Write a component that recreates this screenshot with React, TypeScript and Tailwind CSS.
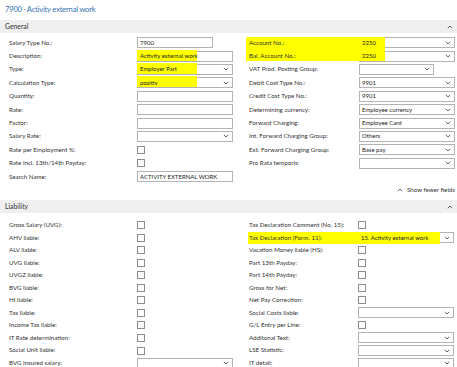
const font = { fontFamily: 'Lato, "Open Sans", sans-serif' }

type Ctl =
  | { kind: 'text'; value?: string; w?: string }
  | { kind: 'select'; value?: string; w?: string }
  | { kind: 'check' }

interface Field {
  label: string
  ctl: Ctl
}

const Chevron = ({ up = false }: { up?: boolean }) => (
  <svg width="6" height="4" viewBox="0 0 6 4" className="shrink-0">
    <polyline
      points={up ? '0.8,3.2 3,1 5.2,3.2' : '0.8,0.8 3,3 5.2,0.8'}
      fill="none"
      stroke="#555"
      strokeWidth="0.9"
    />
  </svg>
)

const Control = ({ ctl }: { ctl: Ctl }) => {
  if (ctl.kind === 'check') {
    return <div className="w-[8px] h-[8px] border border-[#8d8d8d] bg-white"></div>
  }
  return (
    <div
      className={`relative h-[11px] border border-[#b3b3b3] flex items-center justify-between pl-[2px] pr-[3px] ${
        ctl.w ?? 'w-[96px]'
      }`}
    >
      <span className="relative z-20 text-[6px] leading-none text-[#222] whitespace-nowrap">{ctl.value}</span>
      {ctl.kind === 'select' && (
        <span className="relative z-20">
          <Chevron />
        </span>
      )}
    </div>
  )
}

const Row = ({ f, h, lw }: { f: Field; h: string; lw: string }) => (
  <div className={`flex items-center ${h}`}>
    <div className={`relative z-20 shrink-0 text-[6.2px] leading-none text-[#333] whitespace-nowrap ${lw}`}>{f.label}</div>
    <Control ctl={f.ctl} />
  </div>
)

const generalLeft: Field[] = [
  { label: 'Salary Type No.:', ctl: { kind: 'text', value: '7900', w: 'w-[76px]' } },
  { label: 'Description:', ctl: { kind: 'text', value: 'Activity external work' } },
  { label: 'Type:', ctl: { kind: 'select', value: 'Employer Part' } },
  { label: 'Calculation Type:', ctl: { kind: 'select', value: 'positiv' } },
  { label: 'Quantity:', ctl: { kind: 'text' } },
  { label: 'Rate:', ctl: { kind: 'text' } },
  { label: 'Factor:', ctl: { kind: 'text' } },
  { label: 'Salary Rate:', ctl: { kind: 'select' } },
  { label: 'Rate per Employment %:', ctl: { kind: 'check' } },
  { label: 'Rate incl. 13th/14th Payday:', ctl: { kind: 'check' } },
  { label: 'Search Name:', ctl: { kind: 'text', value: 'ACTIVITY EXTERNAL WORK' } },
]

const generalRight: Field[] = [
  { label: 'Account No.:', ctl: { kind: 'select', value: '2250' } },
  { label: 'Bal. Account No.:', ctl: { kind: 'select', value: '2250' } },
  { label: 'VAT Prod. Posting Group:', ctl: { kind: 'select', w: 'w-[75px]' } },
  { label: 'Debit Cost Type No.:', ctl: { kind: 'select', value: '9901' } },
  { label: 'Credit Cost Type No.:', ctl: { kind: 'select', value: '9901' } },
  { label: 'Determining currency:', ctl: { kind: 'select', value: 'Employee currency' } },
  { label: 'Forward Charging:', ctl: { kind: 'select', value: 'Employee Card' } },
  { label: 'Int. Forward Charging Group:', ctl: { kind: 'select', value: 'Others' } },
  { label: 'Ext. Forward Charging Group:', ctl: { kind: 'select', value: 'Base pay' } },
  { label: 'Pro Rata temporis:', ctl: { kind: 'select' } },
]

const check: Ctl = { kind: 'check' }

const liabilityLeft: Field[] = [
  { label: 'Gross Salary (UVG):', ctl: check },
  { label: 'AHV liable:', ctl: check },
  { label: 'ALV liable:', ctl: check },
  { label: 'UVG liable:', ctl: check },
  { label: 'UVGZ liable:', ctl: check },
  { label: 'BVG liable:', ctl: check },
  { label: 'HI liable:', ctl: check },
  { label: 'Tax liable:', ctl: check },
  { label: 'Income Tax liable:', ctl: check },
  { label: 'IT Rate determination:', ctl: check },
  { label: 'Social Unit liable:', ctl: check },
  { label: 'BVG insured salary:', ctl: { kind: 'select' } },
]

const liabilityRight: Field[] = [
  { label: 'Tax Declaration Comment (No. 15):', ctl: check },
  { label: 'Tax Declaration (Form. 11):', ctl: { kind: 'select', value: '15. Activity external work' } },
  { label: 'Vacation Money liable (HS):', ctl: check },
  { label: 'Part 13th Payday:', ctl: check },
  { label: 'Part 14th Payday:', ctl: check },
  { label: 'Gross for Net:', ctl: check },
  { label: 'Net Pay Correction:', ctl: check },
  { label: 'Social Costs liable:', ctl: { kind: 'select' } },
  { label: 'G/L Entry per Line:', ctl: check },
  { label: 'Additonal Text:', ctl: { kind: 'select' } },
  { label: 'LSE Statistic:', ctl: { kind: 'select' } },
  { label: 'IT detail:', ctl: { kind: 'select' } },
]

const SectionHeader = ({ title }: { title: string }) => (
  <div className="h-[13px] bg-[#efefef] flex items-center justify-between pl-[5px] pr-[4px]">
    <span className="text-[6.8px] leading-none text-[#333]">{title}</span>
    <Chevron up />
  </div>
)

export default function App() {
  return (
    <div className="w-[457px] h-[367px] bg-white overflow-hidden" style={font}>
      <div className="h-[20px] flex items-center pl-[5px]">
        <span className="text-[7.6px] tracking-[-0.2px] leading-none text-[#3573b3] whitespace-nowrap">
          7900 · Activity external work
        </span>
      </div>

      <SectionHeader title="General" />

      <div className="relative flex pl-[9px] pt-[3px]">
        {/* highlights */}
        <div className="absolute z-10 bg-[#ffff00] left-[137px] top-[16.5px] w-[60px] h-[11px]"></div>
        <div className="absolute z-10 bg-[#ffff00] left-[137px] top-[29.5px] w-[60px] h-[11.5px]"></div>
        <div className="absolute z-10 bg-[#ffff00] left-[137px] top-[42.5px] w-[60px] h-[11.5px]"></div>
        <div className="absolute z-10 bg-[#ffff00] left-[246px] top-[4px] w-[139px] h-[24px]"></div>

        <div className="w-[240px] shrink-0">
          {generalLeft.map((f) => (
            <Row key={f.label} f={f} h="h-[13.4px]" lw="w-[128px]" />
          ))}
        </div>
        <div>
          {generalRight.map((f) => (
            <Row key={f.label} f={f} h="h-[13.4px]" lw="w-[110px]" />
          ))}
        </div>
      </div>

      <div className="h-[13px] flex items-center justify-end gap-[4px] pr-[2px]">
        <Chevron up />
        <span className="text-[6.2px] leading-none text-[#333]">Show fewer fields</span>
      </div>

      <div className="mt-[4px]">
        <SectionHeader title="Liability" />
      </div>

      <div className="relative flex pl-[9px] pt-[5.5px]">
        <div className="absolute z-10 bg-[#ffff00] left-[248px] top-[18.5px] w-[192px] h-[12px]"></div>

        <div className="w-[240px] shrink-0">
          {liabilityLeft.map((f) => (
            <Row key={f.label} f={f} h="h-[12.55px]" lw="w-[128px]" />
          ))}
        </div>
        <div>
          {liabilityRight.map((f) => (
            <Row key={f.label} f={f} h="h-[12.55px]" lw="w-[109px]" />
          ))}
        </div>
      </div>
    </div>
  )
}
